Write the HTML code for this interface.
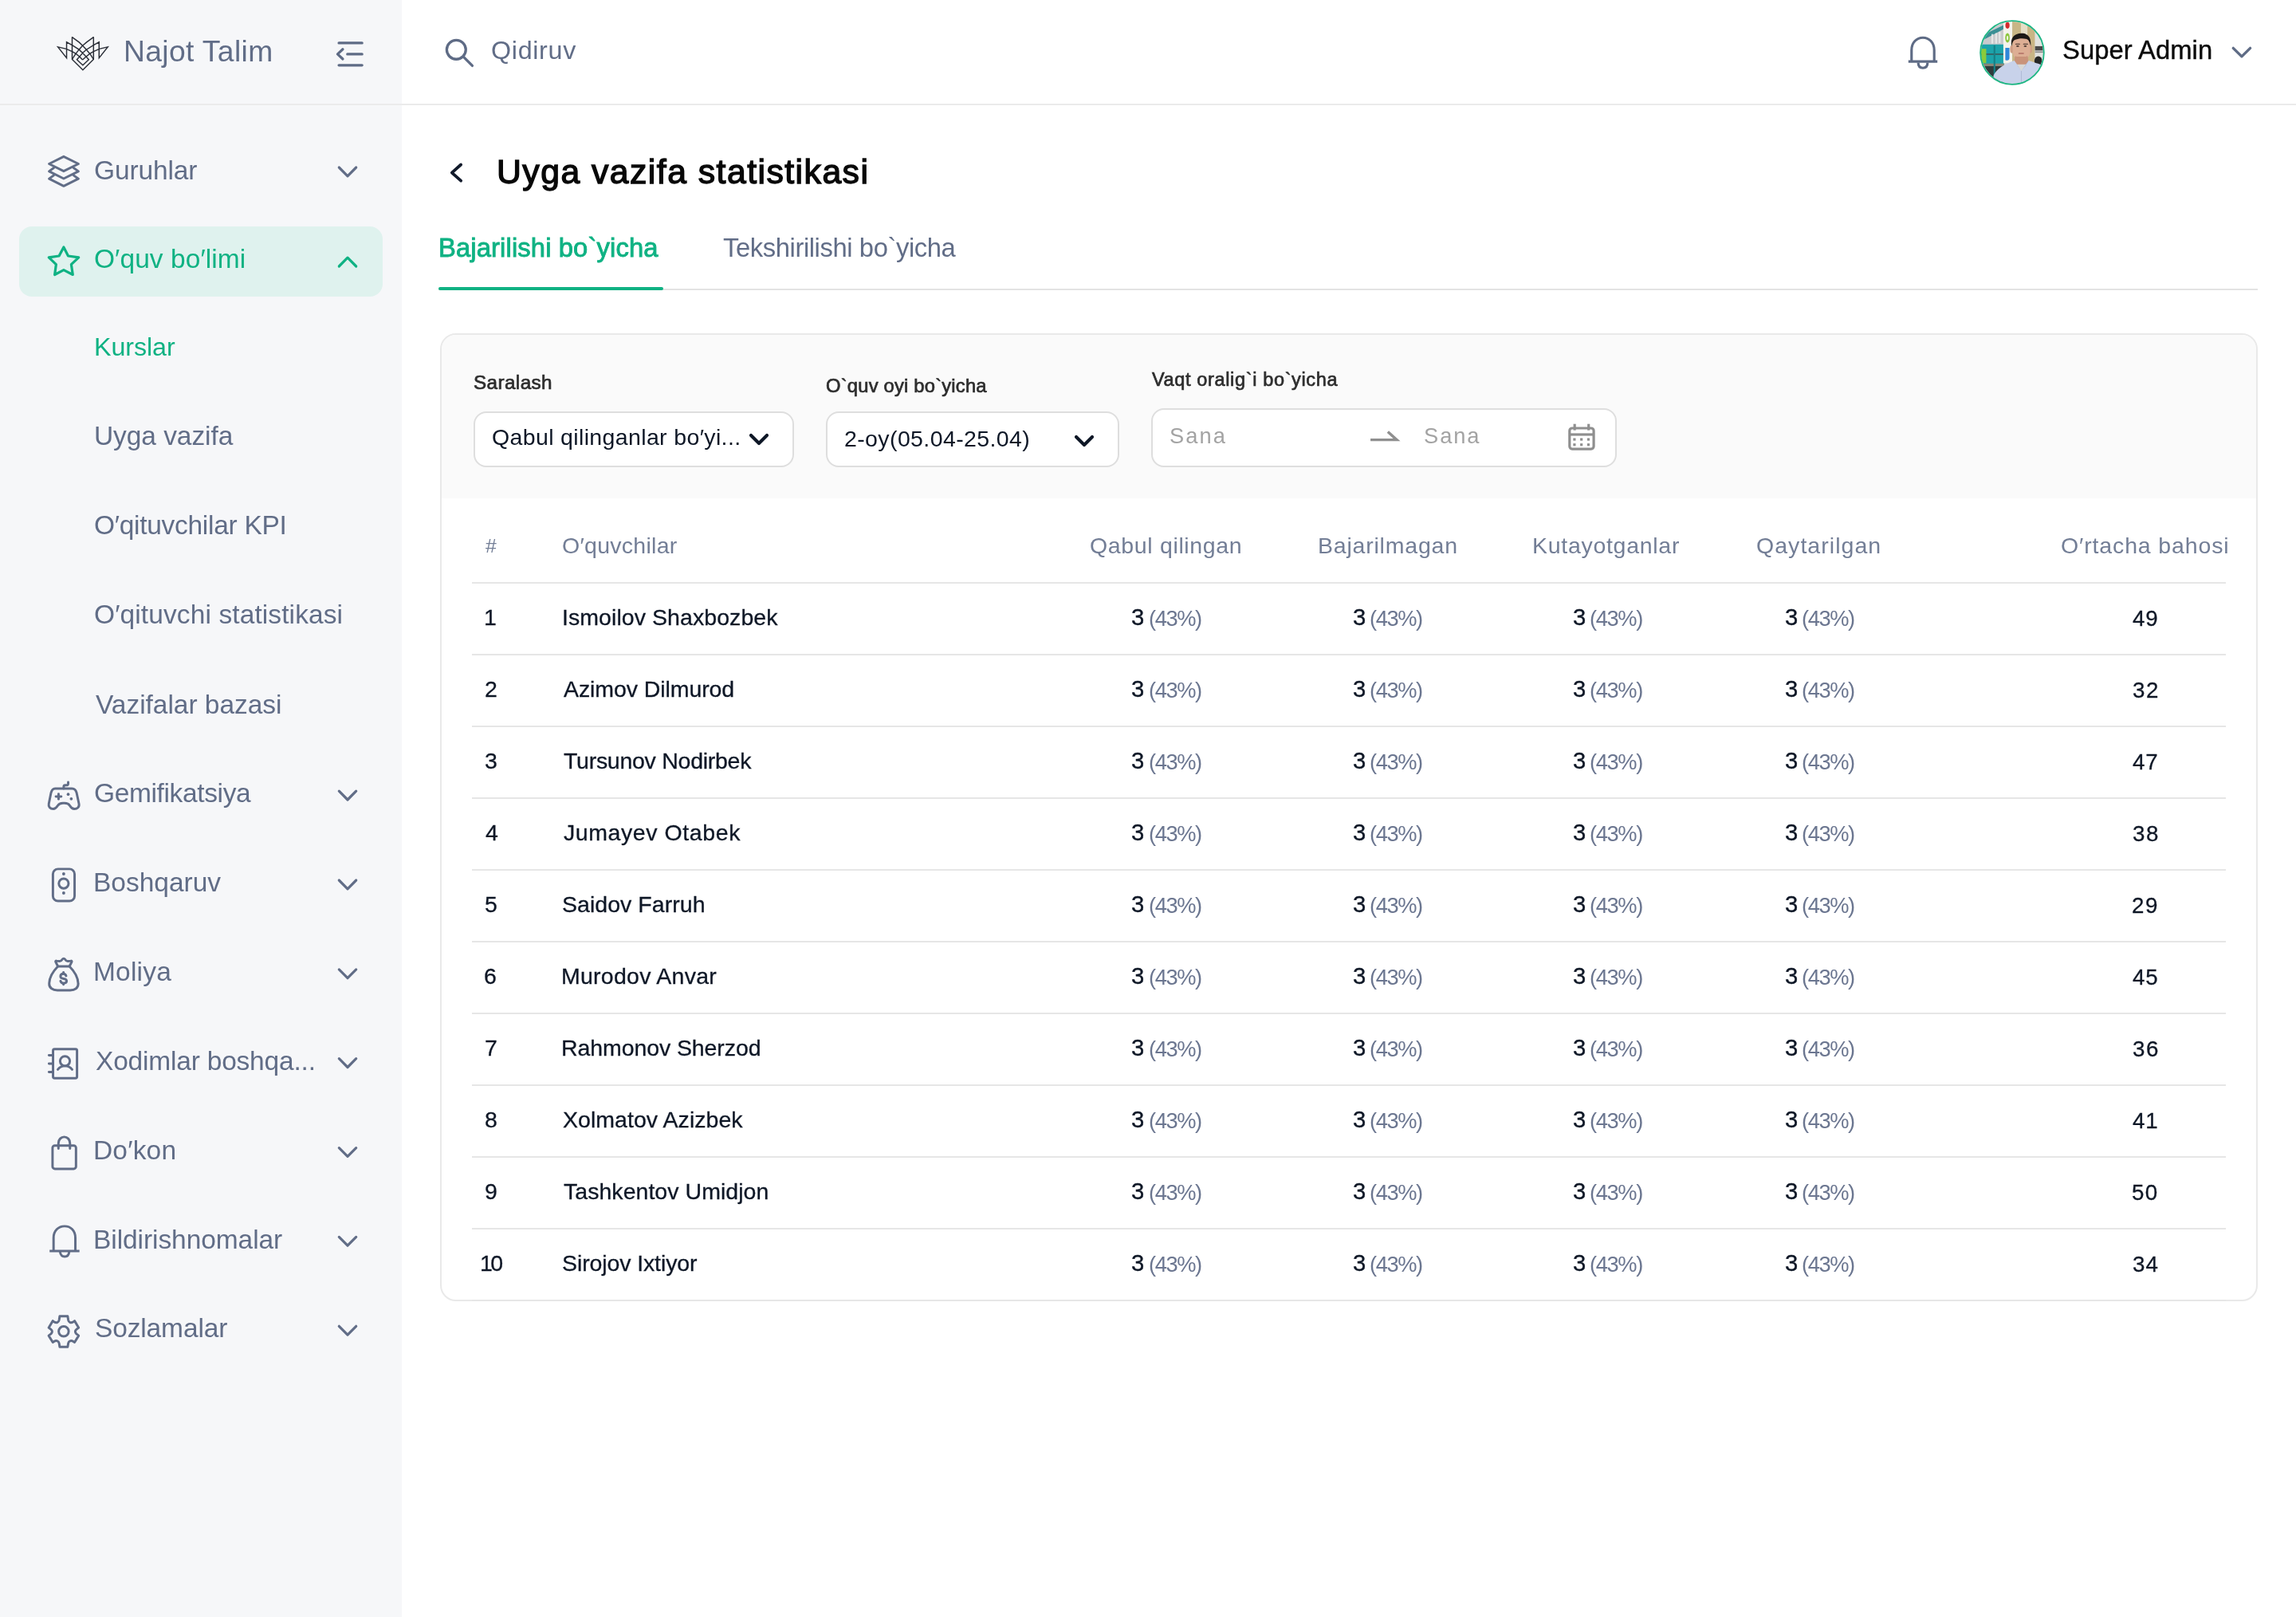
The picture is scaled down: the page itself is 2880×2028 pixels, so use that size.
<!DOCTYPE html><html><head><meta charset="utf-8"><style>
html,body{margin:0;padding:0;width:2880px;height:2028px;overflow:hidden;background:#fff}
.t{position:absolute;white-space:nowrap;line-height:1;font-family:"Liberation Sans",sans-serif;will-change:transform}
svg{position:absolute}
</style></head><body>
<div style="position:absolute;left:0px;top:0px;width:504px;height:2028px;background:#F6F7F9;"></div>
<div style="position:absolute;left:0px;top:130px;width:2880px;height:2px;background:#EBEBEB;"></div>
<svg style="position:absolute;left:66px;top:40px" width="76" height="52" viewBox="0 0 2296 1571" fill="none" stroke="#2A2E37" stroke-width="44" stroke-linejoin="miter">
<polyline points="1135,1060 1020,935 870,820 740,745 520,645 200,570 530,990 530,385 740,500 1000,670 1135,800 1270,940 1370,1050 1145,1260 920,1050 1020,940 1135,800 1270,680 1550,500 1760,385 1760,990 2090,570 1770,645 1550,745 1420,820 1270,935 1135,1060"/>
<polyline points="740,190 740,1040 1145,1440 1550,1040 1550,190"/>
<polyline points="740,200 1000,390 1135,520 1280,670 1430,850 1550,1040"/>
<polyline points="1550,200 1290,390 1135,520 1000,670 860,850 740,1040"/>
</svg>
<div class="t" style="left:154.95px;top:46px;font-size:37.25px;letter-spacing:0.367px;color:#616D87;">Najot Talim</div>
<svg style="position:absolute;left:412px;top:44px" width="54" height="48" viewBox="0 0 1819 1617" fill="none" stroke="#5E6B85" stroke-width="110" stroke-linecap="round" stroke-linejoin="round">
<line x1="440" y1="335" x2="1420" y2="335"/><line x1="800" y1="805" x2="1420" y2="805"/><line x1="440" y1="1275" x2="1420" y2="1275"/>
<polyline points="605,600 385,805 605,1010"/></svg>
<div style="position:absolute;left:24px;top:284px;width:456px;height:88px;background:#DFF2EE;border-radius:16px;"></div>
<svg style="position:absolute;left:54px;top:188px" width="52" height="52" viewBox="0 0 1617 1617" fill="none" stroke="#616D87" stroke-width="92" stroke-linecap="round" stroke-linejoin="round"><polygon points="805,260 1380,545 805,830 235,545"/><polyline points="420,700 235,835 805,1120 1380,835 1190,700"/><polyline points="420,990 235,1125 805,1410 1380,1125 1190,990"/></svg>
<div class="t" style="left:118.45px;top:197px;font-size:33.5px;letter-spacing:-0.141px;color:#616D87;">Guruhlar</div>
<svg style="position:absolute;left:0;top:0;overflow:visible" width="1" height="1"><polyline points="425.3,210.0 436,220.8 446.7,210.0" fill="none" stroke="#616D87" stroke-width="3.2" stroke-linecap="round" stroke-linejoin="round"/></svg>
<svg style="position:absolute;left:54px;top:302px" width="52" height="52" viewBox="0 0 1617 1617" fill="none" stroke="#0FB283" stroke-width="100" stroke-linecap="round" stroke-linejoin="round"><polygon points="805,250 980,590 1390,650 1100,920 1160,1320 805,1140 455,1320 510,920 225,650 625,590"/></svg>
<div class="t" style="left:118.05px;top:308px;font-size:33.5px;letter-spacing:0.062px;color:#0FB283;">O′quv bo′limi</div>
<svg style="position:absolute;left:0;top:0;overflow:visible" width="1" height="1"><polyline points="425.3,334.0 436,323.2 446.7,334.0" fill="none" stroke="#0FB283" stroke-width="3.2" stroke-linecap="round" stroke-linejoin="round"/></svg>
<div class="t" style="left:117.56px;top:419px;font-size:32.25px;letter-spacing:-0.073px;color:#0FB283;">Kurslar</div>
<div class="t" style="left:118.35px;top:530px;font-size:33.5px;letter-spacing:-0.072px;color:#616D87;">Uyga vazifa</div>
<div class="t" style="left:118.31px;top:642px;font-size:33.5px;letter-spacing:-0.290px;color:#616D87;">O′qituvchilar KPI</div>
<div class="t" style="left:118.31px;top:754px;font-size:33.5px;letter-spacing:0.105px;color:#616D87;">O′qituvchi statistikasi</div>
<div class="t" style="left:120.24px;top:867px;font-size:33.5px;letter-spacing:-0.036px;color:#616D87;">Vazifalar bazasi</div>
<svg style="position:absolute;left:54px;top:970px" width="52" height="52" viewBox="0 0 1617 1617" fill="none" stroke="#616D87" stroke-width="92" stroke-linecap="round" stroke-linejoin="round"><path d="M470,590 L1130,590 C1230,590 1290,680 1310,760 L1400,1180 C1430,1320 1320,1390 1220,1385 C1130,1380 1080,1320 1040,1250 C990,1170 930,1160 840,1160 L770,1160 C680,1160 620,1180 570,1260 C520,1340 470,1385 400,1385 C280,1385 200,1300 225,1180 L310,760 C330,680 390,590 470,590 Z"/><path d="M805,590 L805,520 C805,480 830,460 870,460 L930,460 C965,460 980,440 980,400 L980,340"/><line x1="500" y1="900" x2="710" y2="900"/><line x1="605" y1="800" x2="605" y2="1000"/><circle cx="980" cy="815" r="58" fill="#5E6B85" stroke="none"/><circle cx="1100" cy="990" r="58" fill="#5E6B85" stroke="none"/></svg>
<div class="t" style="left:118.45px;top:978px;font-size:33.5px;letter-spacing:-0.363px;color:#616D87;">Gemifikatsiya</div>
<svg style="position:absolute;left:0;top:0;overflow:visible" width="1" height="1"><polyline points="425.3,992.2 436,1003.0 446.7,992.2" fill="none" stroke="#616D87" stroke-width="3.2" stroke-linecap="round" stroke-linejoin="round"/></svg>
<svg style="position:absolute;left:54px;top:1082px" width="52" height="52" viewBox="0 0 1617 1617" fill="none" stroke="#616D87" stroke-width="92" stroke-linecap="round" stroke-linejoin="round"><rect x="385" y="245" width="845" height="1250" rx="200"/><circle cx="805" cy="810" r="190"/><circle cx="805" cy="435" r="60" fill="#5E6B85" stroke="none"/><circle cx="805" cy="1180" r="60" fill="#5E6B85" stroke="none"/></svg>
<div class="t" style="left:117.36px;top:1090px;font-size:33.5px;letter-spacing:-0.015px;color:#616D87;">Boshqaruv</div>
<svg style="position:absolute;left:0;top:0;overflow:visible" width="1" height="1"><polyline points="425.3,1104.0 436,1114.8 446.7,1104.0" fill="none" stroke="#616D87" stroke-width="3.2" stroke-linecap="round" stroke-linejoin="round"/></svg>
<svg style="position:absolute;left:54px;top:1194px" width="52" height="52" viewBox="0 0 1617 1617" fill="none" stroke="#616D87" stroke-width="92" stroke-linecap="round" stroke-linejoin="round"><path d="M580,560 C380,760 250,1000 240,1220 C230,1400 380,1490 560,1490 L1060,1490 C1240,1490 1390,1400 1370,1220 C1360,1000 1230,760 1030,560 Z"/><path d="M580,560 L490,380 C480,350 500,340 530,345 L640,360 C690,365 720,340 750,290 C780,240 830,240 860,290 C890,340 920,365 970,360 L1080,345 C1110,340 1130,350 1120,380 L1030,560"/><path d="M900,930 C880,870 840,850 790,850 C720,850 680,890 680,950 C680,1010 730,1030 800,1040 C870,1050 920,1070 920,1130 C920,1190 870,1220 800,1220 C740,1220 700,1190 680,1130"/><line x1="797" y1="790" x2="797" y2="850"/><line x1="797" y1="1220" x2="797" y2="1270"/></svg>
<div class="t" style="left:117.36px;top:1202px;font-size:33.5px;letter-spacing:0.196px;color:#616D87;">Moliya</div>
<svg style="position:absolute;left:0;top:0;overflow:visible" width="1" height="1"><polyline points="425.3,1215.9 436,1226.7 446.7,1215.9" fill="none" stroke="#616D87" stroke-width="3.2" stroke-linecap="round" stroke-linejoin="round"/></svg>
<svg style="position:absolute;left:54px;top:1306px" width="52" height="52" viewBox="0 0 1617 1617" fill="none" stroke="#616D87" stroke-width="92" stroke-linecap="round" stroke-linejoin="round"><rect x="390" y="300" width="935" height="1135" rx="60"/><line x1="230" y1="545" x2="390" y2="545"/><line x1="230" y1="870" x2="390" y2="870"/><line x1="230" y1="1195" x2="390" y2="1195"/><circle cx="855" cy="770" r="190"/><path d="M575,1100 C650,1000 740,960 855,960 C970,960 1060,1000 1135,1100"/></svg>
<div class="t" style="left:119.98px;top:1314px;font-size:33.5px;letter-spacing:-0.199px;color:#616D87;">Xodimlar boshqa...</div>
<svg style="position:absolute;left:0;top:0;overflow:visible" width="1" height="1"><polyline points="425.3,1327.7 436,1338.5 446.7,1327.7" fill="none" stroke="#616D87" stroke-width="3.2" stroke-linecap="round" stroke-linejoin="round"/></svg>
<svg style="position:absolute;left:54px;top:1418px" width="52" height="52" viewBox="0 0 1617 1617" fill="none" stroke="#616D87" stroke-width="92" stroke-linecap="round" stroke-linejoin="round"><rect x="370" y="580" width="915" height="910" rx="90"/><path d="M600,700 L600,490 C600,350 700,245 825,245 C950,245 1050,350 1050,490 L1050,700"/></svg>
<div class="t" style="left:117.31px;top:1426px;font-size:33.5px;letter-spacing:0.179px;color:#616D87;">Do′kon</div>
<svg style="position:absolute;left:0;top:0;overflow:visible" width="1" height="1"><polyline points="425.3,1439.6 436,1450.4 446.7,1439.6" fill="none" stroke="#616D87" stroke-width="3.2" stroke-linecap="round" stroke-linejoin="round"/></svg>
<svg style="position:absolute;left:54px;top:1530px" width="52" height="52" viewBox="0 0 1617 1617" fill="none" stroke="#616D87" stroke-width="92" stroke-linecap="round" stroke-linejoin="round"><path d="M410,1215 L410,700 C410,420 600,245 840,245 C1080,245 1260,420 1260,700 L1260,1215" stroke-linecap="butt"/><line x1="255" y1="1215" x2="1420" y2="1215" stroke-linecap="butt"/><path d="M660,1240 C680,1360 750,1430 845,1430 C940,1430 1010,1360 1020,1240"/></svg>
<div class="t" style="left:117.36px;top:1538px;font-size:33.5px;letter-spacing:-0.069px;color:#616D87;">Bildirishnomalar</div>
<svg style="position:absolute;left:0;top:0;overflow:visible" width="1" height="1"><polyline points="425.3,1551.4 436,1562.2 446.7,1551.4" fill="none" stroke="#616D87" stroke-width="3.2" stroke-linecap="round" stroke-linejoin="round"/></svg>
<svg style="position:absolute;left:54px;top:1642px" width="52" height="52" viewBox="0 0 1617 1617" fill="none" stroke="#616D87" stroke-width="92" stroke-linecap="round" stroke-linejoin="round"><path d="M650,270 L960,270 L985,430 C1000,510 1090,550 1170,500 L1230,455 L1390,720 L1300,790 C1240,840 1240,900 1300,960 L1390,1030 L1230,1290 L1170,1250 C1090,1200 1000,1240 985,1320 L960,1470 L650,1470 L625,1320 C610,1240 520,1200 440,1250 L380,1290 L220,1030 L310,960 C370,900 370,840 310,790 L220,720 L380,455 L440,500 C520,550 610,510 625,430 Z"/><circle cx="805" cy="865" r="195"/></svg>
<div class="t" style="left:118.81px;top:1649px;font-size:33.5px;letter-spacing:-0.137px;color:#616D87;">Sozlamalar</div>
<svg style="position:absolute;left:0;top:0;overflow:visible" width="1" height="1"><polyline points="425.3,1663.3 436,1674.1 446.7,1663.3" fill="none" stroke="#616D87" stroke-width="3.2" stroke-linecap="round" stroke-linejoin="round"/></svg>
<svg style="position:absolute;left:520px;top:20px" width="280" height="100" viewBox="0 0 2296 820" fill="none" stroke="#5E6B85" stroke-width="27" stroke-linecap="round">
<circle cx="429" cy="347" r="98"/><line x1="508" y1="426" x2="594" y2="512"/></svg>
<div class="t" style="left:615.63px;top:47px;font-size:32.25px;letter-spacing:0.691px;color:#616D87;">Qidiruv</div>
<svg style="position:absolute;left:2380px;top:20px" width="480" height="100" viewBox="0 0 2296 478" fill="none" stroke="#5E6B85" stroke-width="15">
<path d="M85,273 L85,205 C85,160 115,130 153,130 C191,130 221,160 221,205 L221,273"/><line x1="66" y1="273" x2="240" y2="273"/><path d="M125,280 C125,305 138,312 153,312 C168,312 181,305 181,280"/>
<polyline points="2015,193 2066,243 2117,193" stroke-width="16" stroke-linecap="round" stroke-linejoin="round"/>
</svg>
<div class="t" style="left:2587.13px;top:47px;font-size:32.75px;letter-spacing:0.060px;color:#0B0B0B;-webkit-text-stroke:0.4px #0B0B0B;">Super Admin</div>
<svg style="position:absolute;left:2480px;top:22px" width="90" height="88" viewBox="0 0 1654 1617">
<defs><clipPath id="av"><circle cx="808" cy="808" r="715"/></clipPath></defs>
<g clip-path="url(#av)">
<rect x="0" y="0" width="1654" height="1617" fill="#D8D8D6"/>
<rect x="0" y="0" width="620" height="650" fill="#C9CACD"/>
<polygon points="60,440 620,170 620,260 60,560" fill="#3A8F94"/>
<g fill="#EDEDED" opacity="0.8"><rect x="330" y="380" width="40" height="220"/><rect x="420" y="360" width="40" height="240"/><rect x="500" y="330" width="40" height="260"/></g>
<rect x="60" y="620" width="560" height="480" fill="#1CA3AA"/>
<rect x="60" y="830" width="560" height="30" fill="#3B5A5C"/>
<rect x="60" y="720" width="150" height="330" fill="#8BCB3B"/>
<rect x="60" y="1060" width="560" height="60" fill="#8B8576"/>
<rect x="60" y="1120" width="560" height="500" fill="#2F3B3C"/>
<rect x="380" y="640" width="40" height="700" fill="#177F86"/>
<rect x="605" y="60" width="205" height="990" fill="#F4F3EC"/>
<ellipse cx="700" cy="180" rx="48" ry="75" fill="#D42A2E"/>
<ellipse cx="700" cy="470" rx="52" ry="110" fill="#8CC63E"/>
<ellipse cx="700" cy="470" rx="20" ry="50" fill="#F4F3EC"/>
<path d="M650,700 L745,700 L745,930 C745,990 700,1000 650,980 Z" fill="#2E87DA"/>
<rect x="810" y="60" width="200" height="1000" fill="#C8B686"/>
<rect x="1010" y="60" width="150" height="1000" fill="#E6DEC6"/>
<rect x="1160" y="60" width="175" height="1000" fill="#C9B585"/>
<rect x="1335" y="60" width="320" height="1000" fill="#E2E2DF"/>
<rect x="1335" y="660" width="320" height="100" fill="#4A4A4A"/>
<rect x="1335" y="780" width="320" height="30" fill="#8A8A8A"/>
<ellipse cx="1410" cy="1000" rx="90" ry="110" fill="#262626"/>
<ellipse cx="800" cy="730" rx="40" ry="90" fill="#CF9E85"/>
<ellipse cx="1230" cy="730" rx="40" ry="90" fill="#CF9E85"/>
<path d="M820,600 C820,430 900,370 1020,370 C1150,370 1230,440 1230,600 L1220,820 C1200,920 1110,975 1015,975 C920,975 840,920 825,820 Z" fill="#DDAE94"/>
<path d="M790,640 C770,460 860,370 1015,365 C1170,360 1250,450 1235,650 C1215,590 1200,520 1150,500 C1060,470 960,480 880,510 C830,530 810,580 800,650 Z" fill="#1C1816"/>
<g fill="#3A2A24"><rect x="880" y="600" width="110" height="22" rx="10"/><rect x="1060" y="600" width="115" height="22" rx="10"/><ellipse cx="935" cy="660" rx="35" ry="15"/><ellipse cx="1110" cy="660" rx="35" ry="15"/></g>
<rect x="950" y="815" width="130" height="25" rx="12" fill="#B06F63"/>
<path d="M880,880 C940,960 1090,960 1160,880 L1150,950 C1090,990 950,990 890,950 Z" fill="#8C6A5A" opacity="0.6"/>
<polygon points="870,900 1170,900 1190,1080 850,1080" fill="#C9937A"/>
<path d="M340,1617 L380,1330 C440,1190 640,1060 860,990 L1020,1230 L1190,990 C1310,1030 1440,1070 1500,1090 L1654,1617 Z" fill="#C8D2EA"/>
<path d="M860,990 L1020,1230 L940,1120 Z M1190,990 L1020,1230 L1120,1110 Z" fill="#AEB9D6"/>
<line x1="1020" y1="1230" x2="1020" y2="1617" stroke="#AEB9D6" stroke-width="18"/>
</g>
<circle cx="808" cy="808" r="732" fill="none" stroke="#1DB584" stroke-width="34"/>
</svg>
<svg style="position:absolute;left:540px;top:180px" width="580" height="80" viewBox="0 0 2296 317" fill="none" stroke="#111A2B" stroke-width="15" stroke-linecap="round" stroke-linejoin="round"><polyline points="150,105 105,145 150,185"/></svg>
<div class="t" style="left:622.81px;top:194px;font-size:42.75px;letter-spacing:1.458px;color:#080808;-webkit-text-stroke:1.4px #080808;">Uyga vazifa statistikasi</div>
<div class="t" style="left:549.97px;top:295px;font-size:32.75px;letter-spacing:0.127px;color:#0FB283;-webkit-text-stroke:0.9px #0FB283;">Bajarilishi bo`yicha</div>
<div class="t" style="left:907.15px;top:295px;font-size:32.75px;letter-spacing:-0.407px;color:#616D87;">Tekshirilishi bo`yicha</div>
<div style="position:absolute;left:550px;top:362px;width:2282px;height:2px;background:#E3E3E3;"></div>
<div style="position:absolute;left:550px;top:360px;width:282px;height:4px;background:#0FB283;border-radius:2px;"></div>
<div style="position:absolute;left:552px;top:418px;width:2276px;height:1210px;border:2px solid #E9E9E9;border-radius:20px;overflow:hidden;background:#fff"><div style="position:absolute;left:0;top:0;width:100%;height:205px;background:#FAFAFA"></div></div>
<div class="t" style="left:593.68px;top:468px;font-size:24.25px;letter-spacing:0.412px;color:#2D2D2D;-webkit-text-stroke:0.7px #2D2D2D;">Saralash</div>
<div class="t" style="left:1035.95px;top:472px;font-size:23.75px;letter-spacing:0.209px;color:#2D2D2D;-webkit-text-stroke:0.7px #2D2D2D;">O`quv oyi bo`yicha</div>
<div class="t" style="left:1444.53px;top:465px;font-size:23.5px;letter-spacing:0.645px;color:#2D2D2D;-webkit-text-stroke:0.7px #2D2D2D;">Vaqt oralig`i bo`yicha</div>
<div style="position:absolute;left:594px;top:516px;width:398px;height:66px;border:2px solid #DEDEDE;border-radius:16px;background:#fff"></div>
<div style="position:absolute;left:1036px;top:516px;width:364px;height:66px;border:2px solid #DEDEDE;border-radius:16px;background:#fff"></div>
<div style="position:absolute;left:1444px;top:512px;width:580px;height:70px;border:2px solid #DEDEDE;border-radius:16px;background:#fff"></div>
<div class="t" style="left:617.27px;top:534px;font-size:28.5px;letter-spacing:0.356px;color:#0E1726;">Qabul qilinganlar bo′yi...</div>
<div class="t" style="left:1058.66px;top:536px;font-size:28.5px;letter-spacing:0.390px;color:#0E1726;">2-oy(05.04-25.04)</div>
<svg style="position:absolute;left:0;top:0;overflow:visible" width="1" height="1" fill="none" stroke="#0E1726" stroke-width="4.2" stroke-linecap="round" stroke-linejoin="round"><polyline points="942,546 952,556 962,546"/><polyline points="1350,548 1360,558 1370,548"/></svg>
<div class="t" style="left:1466.85px;top:533px;font-size:27.25px;letter-spacing:2.092px;color:#A3A3A3;">Sana</div>
<div class="t" style="left:1785.94px;top:533px;font-size:27.25px;letter-spacing:1.954px;color:#A3A3A3;">Sana</div>
<svg style="position:absolute;left:1430px;top:440px" width="610" height="160" viewBox="0 0 2296 602" fill="none" stroke="#8F8F8F" stroke-width="12">
<polyline points="1088,420 1212,420 1170,382" stroke-width="13"/>
<rect x="2028" y="365" width="114" height="98" rx="12"/><line x1="2028" y1="395" x2="2142" y2="395"/><line x1="2052" y1="345" x2="2052" y2="375"/><line x1="2118" y1="345" x2="2118" y2="375"/>
<g fill="#8F8F8F" stroke="none"><rect x="2045" y="412" width="12" height="12"/><rect x="2078" y="412" width="12" height="12"/><rect x="2111" y="412" width="12" height="12"/><rect x="2045" y="437" width="12" height="12"/><rect x="2078" y="437" width="12" height="12"/><rect x="2111" y="437" width="12" height="12"/></g>
</svg>
<div class="t" style="left:608.75px;top:673px;font-size:24.75px;letter-spacing:0.000px;color:#737E96;">#</div>
<div class="t" style="left:705.30px;top:670px;font-size:28.5px;letter-spacing:0.277px;color:#737E96;">O′quvchilar</div>
<div class="t" style="left:1366.76px;top:670px;font-size:28.5px;letter-spacing:0.654px;color:#737E96;">Qabul qilingan</div>
<div class="t" style="left:1652.87px;top:670px;font-size:28.5px;letter-spacing:0.791px;color:#737E96;">Bajarilmagan</div>
<div class="t" style="left:1921.96px;top:670px;font-size:28.5px;letter-spacing:0.709px;color:#737E96;">Kutayotganlar</div>
<div class="t" style="left:2202.58px;top:670px;font-size:28.5px;letter-spacing:1.038px;color:#737E96;">Qaytarilgan</div>
<div class="t" style="left:2585.30px;top:670px;font-size:28.5px;letter-spacing:0.854px;color:#737E96;">O′rtacha bahosi</div>
<div style="position:absolute;left:592px;top:730px;width:2200px;height:2px;background:#E6E6E6;"></div>
<div style="position:absolute;left:592px;top:820px;width:2200px;height:2px;background:#E6E6E6;"></div>
<div style="position:absolute;left:592px;top:910px;width:2200px;height:2px;background:#E6E6E6;"></div>
<div style="position:absolute;left:592px;top:1000px;width:2200px;height:2px;background:#E6E6E6;"></div>
<div style="position:absolute;left:592px;top:1090px;width:2200px;height:2px;background:#E6E6E6;"></div>
<div style="position:absolute;left:592px;top:1180px;width:2200px;height:2px;background:#E6E6E6;"></div>
<div style="position:absolute;left:592px;top:1270px;width:2200px;height:2px;background:#E6E6E6;"></div>
<div style="position:absolute;left:592px;top:1360px;width:2200px;height:2px;background:#E6E6E6;"></div>
<div style="position:absolute;left:592px;top:1450px;width:2200px;height:2px;background:#E6E6E6;"></div>
<div style="position:absolute;left:592px;top:1540px;width:2200px;height:2px;background:#E6E6E6;"></div>
<div style="position:absolute;left:592px;top:1630px;width:2200px;height:2px;background:#E6E6E6;"></div>
<div class="t" style="left:606.63px;top:760px;font-size:28.5px;letter-spacing:0.000px;color:#0E1726;-webkit-text-stroke:0.3px #0E1726;">1</div>
<div class="t" style="left:704.64px;top:760px;font-size:28.5px;letter-spacing:0.067px;color:#0E1726;-webkit-text-stroke:0.3px #0E1726;">Ismoilov Shaxbozbek</div>
<div class="t" style="left:1418.74px;top:760px;font-size:29.25px;letter-spacing:0.000px;color:#0E1726;-webkit-text-stroke:0.35px #0E1726;">3</div>
<div class="t" style="left:1440.59px;top:762px;font-size:27.25px;letter-spacing:-1.416px;color:#6B7690;">(43%)</div>
<div class="t" style="left:1697.00px;top:760px;font-size:29.25px;letter-spacing:0.000px;color:#0E1726;-webkit-text-stroke:0.35px #0E1726;">3</div>
<div class="t" style="left:1718.15px;top:762px;font-size:27.25px;letter-spacing:-1.417px;color:#6B7690;">(43%)</div>
<div class="t" style="left:1973.32px;top:760px;font-size:29.25px;letter-spacing:0.000px;color:#0E1726;-webkit-text-stroke:0.35px #0E1726;">3</div>
<div class="t" style="left:1994.29px;top:762px;font-size:27.25px;letter-spacing:-1.362px;color:#6B7690;">(43%)</div>
<div class="t" style="left:2239.00px;top:760px;font-size:29.25px;letter-spacing:0.000px;color:#0E1726;-webkit-text-stroke:0.35px #0E1726;">3</div>
<div class="t" style="left:2260.15px;top:762px;font-size:27.25px;letter-spacing:-1.417px;color:#6B7690;">(43%)</div>
<div class="t" style="left:2675.20px;top:762px;font-size:27.75px;letter-spacing:0.846px;color:#0E1726;-webkit-text-stroke:0.3px #0E1726;">49</div>
<div class="t" style="left:607.62px;top:850px;font-size:28.5px;letter-spacing:0.000px;color:#0E1726;-webkit-text-stroke:0.3px #0E1726;">2</div>
<div class="t" style="left:706.65px;top:850px;font-size:28.5px;letter-spacing:-0.084px;color:#0E1726;-webkit-text-stroke:0.3px #0E1726;">Azimov Dilmurod</div>
<div class="t" style="left:1418.74px;top:850px;font-size:29.25px;letter-spacing:0.000px;color:#0E1726;-webkit-text-stroke:0.35px #0E1726;">3</div>
<div class="t" style="left:1440.59px;top:852px;font-size:27.25px;letter-spacing:-1.416px;color:#6B7690;">(43%)</div>
<div class="t" style="left:1697.00px;top:850px;font-size:29.25px;letter-spacing:0.000px;color:#0E1726;-webkit-text-stroke:0.35px #0E1726;">3</div>
<div class="t" style="left:1718.15px;top:852px;font-size:27.25px;letter-spacing:-1.417px;color:#6B7690;">(43%)</div>
<div class="t" style="left:1973.32px;top:850px;font-size:29.25px;letter-spacing:0.000px;color:#0E1726;-webkit-text-stroke:0.35px #0E1726;">3</div>
<div class="t" style="left:1994.29px;top:852px;font-size:27.25px;letter-spacing:-1.362px;color:#6B7690;">(43%)</div>
<div class="t" style="left:2239.00px;top:850px;font-size:29.25px;letter-spacing:0.000px;color:#0E1726;-webkit-text-stroke:0.35px #0E1726;">3</div>
<div class="t" style="left:2260.15px;top:852px;font-size:27.25px;letter-spacing:-1.417px;color:#6B7690;">(43%)</div>
<div class="t" style="left:2674.53px;top:852px;font-size:27.75px;letter-spacing:1.662px;color:#0E1726;-webkit-text-stroke:0.3px #0E1726;">32</div>
<div class="t" style="left:607.63px;top:940px;font-size:28.5px;letter-spacing:0.000px;color:#0E1726;-webkit-text-stroke:0.3px #0E1726;">3</div>
<div class="t" style="left:706.56px;top:940px;font-size:28.5px;letter-spacing:-0.269px;color:#0E1726;-webkit-text-stroke:0.3px #0E1726;">Tursunov Nodirbek</div>
<div class="t" style="left:1418.74px;top:940px;font-size:29.25px;letter-spacing:0.000px;color:#0E1726;-webkit-text-stroke:0.35px #0E1726;">3</div>
<div class="t" style="left:1440.59px;top:942px;font-size:27.25px;letter-spacing:-1.416px;color:#6B7690;">(43%)</div>
<div class="t" style="left:1697.00px;top:940px;font-size:29.25px;letter-spacing:0.000px;color:#0E1726;-webkit-text-stroke:0.35px #0E1726;">3</div>
<div class="t" style="left:1718.15px;top:942px;font-size:27.25px;letter-spacing:-1.417px;color:#6B7690;">(43%)</div>
<div class="t" style="left:1973.32px;top:940px;font-size:29.25px;letter-spacing:0.000px;color:#0E1726;-webkit-text-stroke:0.35px #0E1726;">3</div>
<div class="t" style="left:1994.29px;top:942px;font-size:27.25px;letter-spacing:-1.362px;color:#6B7690;">(43%)</div>
<div class="t" style="left:2239.00px;top:940px;font-size:29.25px;letter-spacing:0.000px;color:#0E1726;-webkit-text-stroke:0.35px #0E1726;">3</div>
<div class="t" style="left:2260.15px;top:942px;font-size:27.25px;letter-spacing:-1.417px;color:#6B7690;">(43%)</div>
<div class="t" style="left:2675.20px;top:942px;font-size:27.75px;letter-spacing:0.881px;color:#0E1726;-webkit-text-stroke:0.3px #0E1726;">47</div>
<div class="t" style="left:608.51px;top:1030px;font-size:28.5px;letter-spacing:0.000px;color:#0E1726;-webkit-text-stroke:0.3px #0E1726;">4</div>
<div class="t" style="left:706.72px;top:1030px;font-size:28.5px;letter-spacing:0.580px;color:#0E1726;-webkit-text-stroke:0.3px #0E1726;">Jumayev Otabek</div>
<div class="t" style="left:1418.74px;top:1030px;font-size:29.25px;letter-spacing:0.000px;color:#0E1726;-webkit-text-stroke:0.35px #0E1726;">3</div>
<div class="t" style="left:1440.59px;top:1032px;font-size:27.25px;letter-spacing:-1.416px;color:#6B7690;">(43%)</div>
<div class="t" style="left:1697.00px;top:1030px;font-size:29.25px;letter-spacing:0.000px;color:#0E1726;-webkit-text-stroke:0.35px #0E1726;">3</div>
<div class="t" style="left:1718.15px;top:1032px;font-size:27.25px;letter-spacing:-1.417px;color:#6B7690;">(43%)</div>
<div class="t" style="left:1973.32px;top:1030px;font-size:29.25px;letter-spacing:0.000px;color:#0E1726;-webkit-text-stroke:0.35px #0E1726;">3</div>
<div class="t" style="left:1994.29px;top:1032px;font-size:27.25px;letter-spacing:-1.362px;color:#6B7690;">(43%)</div>
<div class="t" style="left:2239.00px;top:1030px;font-size:29.25px;letter-spacing:0.000px;color:#0E1726;-webkit-text-stroke:0.35px #0E1726;">3</div>
<div class="t" style="left:2260.15px;top:1032px;font-size:27.25px;letter-spacing:-1.417px;color:#6B7690;">(43%)</div>
<div class="t" style="left:2674.53px;top:1032px;font-size:27.75px;letter-spacing:1.587px;color:#0E1726;-webkit-text-stroke:0.3px #0E1726;">38</div>
<div class="t" style="left:607.95px;top:1120px;font-size:28.5px;letter-spacing:0.000px;color:#0E1726;-webkit-text-stroke:0.3px #0E1726;">5</div>
<div class="t" style="left:705.11px;top:1120px;font-size:28.5px;letter-spacing:0.041px;color:#0E1726;-webkit-text-stroke:0.3px #0E1726;">Saidov Farruh</div>
<div class="t" style="left:1418.74px;top:1120px;font-size:29.25px;letter-spacing:0.000px;color:#0E1726;-webkit-text-stroke:0.35px #0E1726;">3</div>
<div class="t" style="left:1440.59px;top:1122px;font-size:27.25px;letter-spacing:-1.416px;color:#6B7690;">(43%)</div>
<div class="t" style="left:1697.00px;top:1120px;font-size:29.25px;letter-spacing:0.000px;color:#0E1726;-webkit-text-stroke:0.35px #0E1726;">3</div>
<div class="t" style="left:1718.15px;top:1122px;font-size:27.25px;letter-spacing:-1.417px;color:#6B7690;">(43%)</div>
<div class="t" style="left:1973.32px;top:1120px;font-size:29.25px;letter-spacing:0.000px;color:#0E1726;-webkit-text-stroke:0.35px #0E1726;">3</div>
<div class="t" style="left:1994.29px;top:1122px;font-size:27.25px;letter-spacing:-1.362px;color:#6B7690;">(43%)</div>
<div class="t" style="left:2239.00px;top:1120px;font-size:29.25px;letter-spacing:0.000px;color:#0E1726;-webkit-text-stroke:0.35px #0E1726;">3</div>
<div class="t" style="left:2260.15px;top:1122px;font-size:27.25px;letter-spacing:-1.417px;color:#6B7690;">(43%)</div>
<div class="t" style="left:2674.31px;top:1122px;font-size:27.75px;letter-spacing:1.603px;color:#0E1726;-webkit-text-stroke:0.3px #0E1726;">29</div>
<div class="t" style="left:607.33px;top:1210px;font-size:28.5px;letter-spacing:0.000px;color:#0E1726;-webkit-text-stroke:0.3px #0E1726;">6</div>
<div class="t" style="left:704.40px;top:1210px;font-size:28.5px;letter-spacing:0.254px;color:#0E1726;-webkit-text-stroke:0.3px #0E1726;">Murodov Anvar</div>
<div class="t" style="left:1418.74px;top:1210px;font-size:29.25px;letter-spacing:0.000px;color:#0E1726;-webkit-text-stroke:0.35px #0E1726;">3</div>
<div class="t" style="left:1440.59px;top:1212px;font-size:27.25px;letter-spacing:-1.416px;color:#6B7690;">(43%)</div>
<div class="t" style="left:1697.00px;top:1210px;font-size:29.25px;letter-spacing:0.000px;color:#0E1726;-webkit-text-stroke:0.35px #0E1726;">3</div>
<div class="t" style="left:1718.15px;top:1212px;font-size:27.25px;letter-spacing:-1.417px;color:#6B7690;">(43%)</div>
<div class="t" style="left:1973.32px;top:1210px;font-size:29.25px;letter-spacing:0.000px;color:#0E1726;-webkit-text-stroke:0.35px #0E1726;">3</div>
<div class="t" style="left:1994.29px;top:1212px;font-size:27.25px;letter-spacing:-1.362px;color:#6B7690;">(43%)</div>
<div class="t" style="left:2239.00px;top:1210px;font-size:29.25px;letter-spacing:0.000px;color:#0E1726;-webkit-text-stroke:0.35px #0E1726;">3</div>
<div class="t" style="left:2260.15px;top:1212px;font-size:27.25px;letter-spacing:-1.417px;color:#6B7690;">(43%)</div>
<div class="t" style="left:2675.20px;top:1212px;font-size:27.75px;letter-spacing:0.721px;color:#0E1726;-webkit-text-stroke:0.3px #0E1726;">45</div>
<div class="t" style="left:608.05px;top:1300px;font-size:28.5px;letter-spacing:0.000px;color:#0E1726;-webkit-text-stroke:0.3px #0E1726;">7</div>
<div class="t" style="left:704.40px;top:1300px;font-size:28.5px;letter-spacing:-0.093px;color:#0E1726;-webkit-text-stroke:0.3px #0E1726;">Rahmonov Sherzod</div>
<div class="t" style="left:1418.74px;top:1300px;font-size:29.25px;letter-spacing:0.000px;color:#0E1726;-webkit-text-stroke:0.35px #0E1726;">3</div>
<div class="t" style="left:1440.59px;top:1302px;font-size:27.25px;letter-spacing:-1.416px;color:#6B7690;">(43%)</div>
<div class="t" style="left:1697.00px;top:1300px;font-size:29.25px;letter-spacing:0.000px;color:#0E1726;-webkit-text-stroke:0.35px #0E1726;">3</div>
<div class="t" style="left:1718.15px;top:1302px;font-size:27.25px;letter-spacing:-1.417px;color:#6B7690;">(43%)</div>
<div class="t" style="left:1973.32px;top:1300px;font-size:29.25px;letter-spacing:0.000px;color:#0E1726;-webkit-text-stroke:0.35px #0E1726;">3</div>
<div class="t" style="left:1994.29px;top:1302px;font-size:27.25px;letter-spacing:-1.362px;color:#6B7690;">(43%)</div>
<div class="t" style="left:2239.00px;top:1300px;font-size:29.25px;letter-spacing:0.000px;color:#0E1726;-webkit-text-stroke:0.35px #0E1726;">3</div>
<div class="t" style="left:2260.15px;top:1302px;font-size:27.25px;letter-spacing:-1.417px;color:#6B7690;">(43%)</div>
<div class="t" style="left:2674.53px;top:1302px;font-size:27.75px;letter-spacing:1.564px;color:#0E1726;-webkit-text-stroke:0.3px #0E1726;">36</div>
<div class="t" style="left:607.91px;top:1390px;font-size:28.5px;letter-spacing:0.000px;color:#0E1726;-webkit-text-stroke:0.3px #0E1726;">8</div>
<div class="t" style="left:705.79px;top:1390px;font-size:28.5px;letter-spacing:0.043px;color:#0E1726;-webkit-text-stroke:0.3px #0E1726;">Xolmatov Azizbek</div>
<div class="t" style="left:1418.74px;top:1390px;font-size:29.25px;letter-spacing:0.000px;color:#0E1726;-webkit-text-stroke:0.35px #0E1726;">3</div>
<div class="t" style="left:1440.59px;top:1392px;font-size:27.25px;letter-spacing:-1.416px;color:#6B7690;">(43%)</div>
<div class="t" style="left:1697.00px;top:1390px;font-size:29.25px;letter-spacing:0.000px;color:#0E1726;-webkit-text-stroke:0.35px #0E1726;">3</div>
<div class="t" style="left:1718.15px;top:1392px;font-size:27.25px;letter-spacing:-1.417px;color:#6B7690;">(43%)</div>
<div class="t" style="left:1973.32px;top:1390px;font-size:29.25px;letter-spacing:0.000px;color:#0E1726;-webkit-text-stroke:0.35px #0E1726;">3</div>
<div class="t" style="left:1994.29px;top:1392px;font-size:27.25px;letter-spacing:-1.362px;color:#6B7690;">(43%)</div>
<div class="t" style="left:2239.00px;top:1390px;font-size:29.25px;letter-spacing:0.000px;color:#0E1726;-webkit-text-stroke:0.35px #0E1726;">3</div>
<div class="t" style="left:2260.15px;top:1392px;font-size:27.25px;letter-spacing:-1.417px;color:#6B7690;">(43%)</div>
<div class="t" style="left:2675.20px;top:1392px;font-size:27.75px;letter-spacing:0.815px;color:#0E1726;-webkit-text-stroke:0.3px #0E1726;">41</div>
<div class="t" style="left:607.60px;top:1480px;font-size:28.5px;letter-spacing:0.000px;color:#0E1726;-webkit-text-stroke:0.3px #0E1726;">9</div>
<div class="t" style="left:706.56px;top:1480px;font-size:28.5px;letter-spacing:0.038px;color:#0E1726;-webkit-text-stroke:0.3px #0E1726;">Tashkentov Umidjon</div>
<div class="t" style="left:1418.74px;top:1480px;font-size:29.25px;letter-spacing:0.000px;color:#0E1726;-webkit-text-stroke:0.35px #0E1726;">3</div>
<div class="t" style="left:1440.59px;top:1482px;font-size:27.25px;letter-spacing:-1.416px;color:#6B7690;">(43%)</div>
<div class="t" style="left:1697.00px;top:1480px;font-size:29.25px;letter-spacing:0.000px;color:#0E1726;-webkit-text-stroke:0.35px #0E1726;">3</div>
<div class="t" style="left:1718.15px;top:1482px;font-size:27.25px;letter-spacing:-1.417px;color:#6B7690;">(43%)</div>
<div class="t" style="left:1973.32px;top:1480px;font-size:29.25px;letter-spacing:0.000px;color:#0E1726;-webkit-text-stroke:0.35px #0E1726;">3</div>
<div class="t" style="left:1994.29px;top:1482px;font-size:27.25px;letter-spacing:-1.362px;color:#6B7690;">(43%)</div>
<div class="t" style="left:2239.00px;top:1480px;font-size:29.25px;letter-spacing:0.000px;color:#0E1726;-webkit-text-stroke:0.35px #0E1726;">3</div>
<div class="t" style="left:2260.15px;top:1482px;font-size:27.25px;letter-spacing:-1.417px;color:#6B7690;">(43%)</div>
<div class="t" style="left:2674.46px;top:1482px;font-size:27.75px;letter-spacing:1.430px;color:#0E1726;-webkit-text-stroke:0.3px #0E1726;">50</div>
<div class="t" style="left:601.86px;top:1570px;font-size:28.5px;letter-spacing:-2.503px;color:#0E1726;-webkit-text-stroke:0.3px #0E1726;">10</div>
<div class="t" style="left:705.11px;top:1570px;font-size:28.5px;letter-spacing:-0.108px;color:#0E1726;-webkit-text-stroke:0.3px #0E1726;">Sirojov Ixtiyor</div>
<div class="t" style="left:1418.74px;top:1570px;font-size:29.25px;letter-spacing:0.000px;color:#0E1726;-webkit-text-stroke:0.35px #0E1726;">3</div>
<div class="t" style="left:1440.59px;top:1572px;font-size:27.25px;letter-spacing:-1.416px;color:#6B7690;">(43%)</div>
<div class="t" style="left:1697.00px;top:1570px;font-size:29.25px;letter-spacing:0.000px;color:#0E1726;-webkit-text-stroke:0.35px #0E1726;">3</div>
<div class="t" style="left:1718.15px;top:1572px;font-size:27.25px;letter-spacing:-1.417px;color:#6B7690;">(43%)</div>
<div class="t" style="left:1973.32px;top:1570px;font-size:29.25px;letter-spacing:0.000px;color:#0E1726;-webkit-text-stroke:0.35px #0E1726;">3</div>
<div class="t" style="left:1994.29px;top:1572px;font-size:27.25px;letter-spacing:-1.362px;color:#6B7690;">(43%)</div>
<div class="t" style="left:2239.00px;top:1570px;font-size:29.25px;letter-spacing:0.000px;color:#0E1726;-webkit-text-stroke:0.35px #0E1726;">3</div>
<div class="t" style="left:2260.15px;top:1572px;font-size:27.25px;letter-spacing:-1.417px;color:#6B7690;">(43%)</div>
<div class="t" style="left:2674.53px;top:1572px;font-size:27.75px;letter-spacing:1.077px;color:#0E1726;-webkit-text-stroke:0.3px #0E1726;">34</div>
</body></html>
